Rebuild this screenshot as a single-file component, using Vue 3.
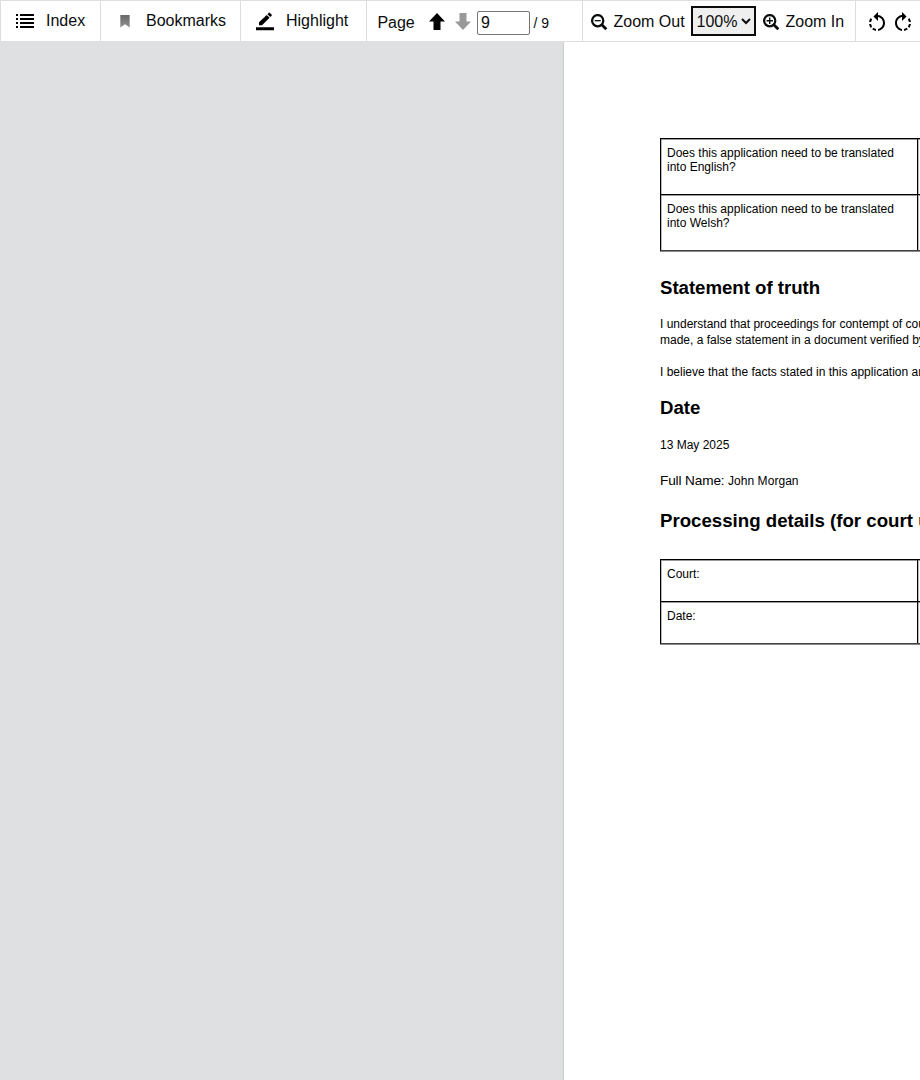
<script setup>
import { ref } from 'vue'

const page = ref('9')
const zoom = ref('100%')
const translationRows = [
  ['Does this application need to be translated', 'into English?'],
  ['Does this application need to be translated', 'into Welsh?'],
]
const courtRows = ['Court:', 'Date:']
</script>

<template>
  <div class="viewer">
    <header class="toolbar">
      <button class="group index">
        <svg width="18" height="14" viewBox="0 0 18 14" shape-rendering="crispEdges">
          <path d="M0 0h2v2H0zM4 0h14v2H4zM0 4h2v2H0zM4 4h14v2H4zM0 8h2v2H0zM4 8h14v2H4zM0 12h2v2H0zM4 12h14v2H4z" />
        </svg>
        <span>Index</span>
      </button>
      <button class="group bookmarks">
        <svg width="10" height="14" viewBox="0 0 10 14">
          <defs>
            <linearGradient id="ribbon" x1="0" y1="0" x2="0" y2="1">
              <stop offset="0" stop-color="#686868" />
              <stop offset="1" stop-color="#929292" />
            </linearGradient>
          </defs>
          <path d="M0.3 1h9.4v12.500L5 10.300 0.3 13.500z" fill="url(#ribbon)" />
        </svg>
        <span>Bookmarks</span>
      </button>
      <button class="group highlight">
        <svg width="18" height="19" viewBox="0 0 18 19">
          <path d="M0 15.200h18V18.200H0zM3 10.200L10.700 2.900l2.900 2.900L6 13.200H3zM11.400 2.200l1.300-1.300q.6-.6 1.200 0l1.700 1.700q.6.6 0 1.200L14.300 5.100z" />
        </svg>
        <span>Highlight</span>
      </button>
      <div class="group paging">
        <span class="label">Page</span>
        <svg class="up" width="16" height="17" viewBox="0 0 16 17">
          <path d="M8 0l8 8.500h-4.500V17h-7V8.500H0z" />
        </svg>
        <svg class="down" width="16" height="17" viewBox="0 0 16 17">
          <path d="M8 17l8-8.500h-4.500V0h-7v8.500H0z" fill="#999" />
        </svg>
        <input v-model="page" type="text" aria-label="Page number" />
        <span class="total">/ 9</span>
      </div>
      <div class="group zooming">
        <svg width="17" height="17" viewBox="0 0 17 17" fill="none" stroke="#0b0c0c">
          <circle cx="6.700" cy="6.700" r="5.600" stroke-width="2.250" />
          <path d="M10.600 10.600l4.700 4.700" stroke-width="2.800" />
          <path d="M3.700 6.700h6" stroke-width="1.300" />
        </svg>
        <span class="out">Zoom Out</span>
        <div class="select">
          <span>{{ zoom }}</span>
          <svg width="10" height="7" viewBox="0 0 10 7" fill="none" stroke="#0b0c0c" stroke-width="2">
            <path d="M1 1l4 4 4-4" />
          </svg>
        </div>
        <svg class="plus" width="17" height="17" viewBox="0 0 17 17" fill="none" stroke="#0b0c0c">
          <circle cx="6.700" cy="6.700" r="5.600" stroke-width="2.250" />
          <path d="M10.600 10.600l4.700 4.700" stroke-width="2.800" />
          <path d="M3.500 6.700h6.400M6.700 3.500v6.400" stroke-width="1.400" />
        </svg>
        <span class="in">Zoom In</span>
      </div>
      <div class="group rotating">
        <svg width="24" height="24" viewBox="0 0 24 24">
          <path d="M7.110 8.530L5.700 7.110C4.800 8.270 4.240 9.610 4.070 11h2.020c.14-.87.49-1.720 1.020-2.470zM6.090 13H4.070c.17 1.390.72 2.730 1.620 3.890l1.410-1.420c-.52-.75-.87-1.590-1.010-2.470zm1.010 5.320c1.160.9 2.510 1.440 3.900 1.610V17.900c-.87-.15-1.710-.49-2.460-1.030L7.100 18.320zM13 4.070V1L8.450 5.550 13 10V6.090c2.840.48 5 2.940 5 5.910s-2.160 5.430-5 5.910v2.020c3.950-.49 7-3.850 7-7.930s-3.050-7.440-7-7.930z" />
        </svg>
        <svg width="24" height="24" viewBox="0 0 24 24">
          <path d="M15.550 5.550L11 1v3.070C7.060 4.560 4 7.920 4 12s3.050 7.440 7 7.930v-2.020c-2.840-.48-5-2.940-5-5.910s2.160-5.430 5-5.910V10l4.550-4.450zM19.930 11c-.17-1.390-.72-2.730-1.620-3.890l-1.420 1.420c.54.75.88 1.600 1.020 2.470h2.020zM13 17.900v2.020c1.390-.17 2.740-.71 3.900-1.610l-1.440-1.440c-.75.54-1.590.89-2.460 1.030zm3.890-2.420l1.420 1.410c.9-1.160 1.450-2.500 1.620-3.890h-2.020c-.14.87-.48 1.720-1.020 2.480z" />
        </svg>
      </div>
    </header>
    <main class="canvas">
      <article class="sheet">
        <div class="grid translation">
          <template v-for="row in translationRows" :key="row[1]">
            <div class="cell">{{ row[0] }}<br />{{ row[1] }}</div>
            <div class="cell"></div>
          </template>
        </div>
        <h2 class="truth">Statement of truth</h2>
        <p class="statement">
          I understand that proceedings for contempt of court<br />
          made, a false statement in a document verified by
        </p>
        <p class="belief">I believe that the facts stated in this application are</p>
        <h2 class="date">Date</h2>
        <p class="day">13 May 2025</p>
        <p class="name"><span class="key">Full Name:</span><span class="value">John Morgan</span></p>
        <h2 class="processing">Processing details (for court use</h2>
        <div class="grid court">
          <template v-for="row in courtRows" :key="row">
            <div class="cell">{{ row }}</div>
            <div class="cell"></div>
          </template>
        </div>
      </article>
    </main>
  </div>
</template>

<style>
body {
  background: #dee0e2;
  overflow: hidden;
}
</style>

<style scoped>
.viewer {
  display: flex;
  flex-direction: column;
  height: 1080px;
  width: 920px;
  overflow: hidden;
  font-family: "Liberation Sans", Arial, sans-serif;
  color: #0b0c0c;
}
.viewer * {
  box-sizing: border-box;
}
svg {
  display: block;
  flex: none;
}
.toolbar {
  display: flex;
  flex: none;
  height: 42px;
  background: #fff;
  border-top: 1px solid #dedede;
  border-bottom: 1px solid #dedede;
  font-size: 16px;
  line-height: 20px;
  white-space: nowrap;
}
.group {
  display: flex;
  align-items: flex-start;
  flex: none;
  margin: 0;
  padding: 0;
  border: 0;
  border-left: 1px solid #dedede;
  background: none;
  font: inherit;
  color: inherit;
}
.group span {
  margin-top: 10px;
}
.index {
  width: 100px;
  padding-left: 15px;
}
.index svg {
  margin: 13px 12px 0 0;
}
.bookmarks {
  width: 140px;
  padding-left: 19px;
}
.bookmarks svg {
  margin: 13px 16px 0 0;
}
.highlight {
  width: 126px;
  padding-left: 15px;
}
.highlight svg {
  margin: 11px 12px 0 0;
}
.paging {
  width: 216px;
  padding-left: 10.4px;
}
.paging .label {
  margin-top: 12px;
  width: 51.6px;
}
.up {
  margin-top: 12px;
}
.down {
  margin: 12px 6px 0 10px;
}
.paging input {
  width: 53px;
  height: 24px;
  margin: 10px 3.5px 0 0;
  padding: 1px 3px;
  border: 1px solid #767676;
  border-radius: 2px;
  font: 16px "Liberation Sans", Arial, sans-serif;
  color: #0b0c0c;
  background: #fff;
}
.paging .total {
  font-size: 14px;
  margin-top: 12px;
}
.zooming {
  width: 273px;
  padding-left: 8px;
}
.zooming svg {
  margin-top: 13px;
}
.zooming span {
  margin-top: 11px;
}
.zooming .out {
  width: 77.5px;
  margin-left: 5.5px;
}
.zooming .select {
  display: flex;
  width: 65px;
  height: 30px;
  margin: 5px 7px 0 0;
  border: 2px solid #0b0c0c;
  background: #efefef;
  padding-left: 3.5px;
}
.zooming .select span {
  margin-top: 4px;
  width: 44.5px;
}
.zooming .select svg {
  margin-top: 10px;
}
.zooming .in {
  margin-left: 5.5px;
}
.rotating {
  padding: 10px 0 0 9px;
  gap: 2px;
}
.canvas {
  flex: 1;
  display: flex;
  background: #dee0e2;
  overflow: hidden;
}
.sheet {
  flex: none;
  width: 794px;
  margin-left: 564px;
  padding: 96px 96px 0;
  background: #fff;
  box-shadow: 0 0 2px rgba(0, 0, 0, 0.25);
  color: #000;
  font-size: 12px;
  line-height: 16px;
  white-space: nowrap;
}
.grid {
  display: grid;
  grid-template-columns: 257px 345px;
  border-left: 1px solid #000;
  border-bottom: 1px solid #444;
  box-shadow: 0 1px 0 #888;
}
.cell {
  border-top: 1px solid #000;
  border-right: 1px solid #000;
  box-shadow: inset 0 1px 0 #999, inset 1px 0 0 #bbb;
  padding: 7px 6px 0;
  line-height: 14px;
}
.translation {
  grid-template-rows: 56px 56px;
}
.court {
  grid-template-rows: 42px 42px;
  margin-top: 27px;
}
h2,
p {
  margin: 0;
}
h2 {
  font-size: 18.67px;
  line-height: 22px;
}
.truth {
  margin-top: 26px;
  letter-spacing: -0.03px;
}
.statement {
  margin-top: 17px;
}
.belief {
  margin-top: 16px;
}
.date {
  margin-top: 17px;
}
.day {
  margin-top: 18px;
}
.name {
  display: flex;
  align-items: baseline;
  height: 16px;
  margin-top: 20px;
}
.name .key {
  width: 68px;
  font-size: 13.6px;
  letter-spacing: -0.12px;
}
.name .value {
  letter-spacing: 0.05px;
}
.processing {
  margin-top: 21px;
}
</style>
